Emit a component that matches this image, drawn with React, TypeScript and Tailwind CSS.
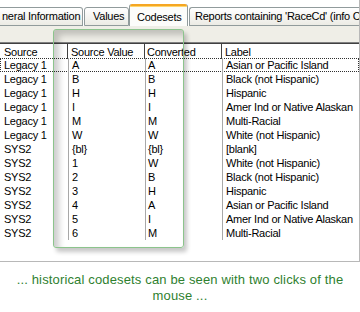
import React from "react";

const rows: [string, string, string, string][] = [
  ["Legacy 1", "A", "A", "Asian or Pacific Island"],
  ["Legacy 1", "B", "B", "Black (not Hispanic)"],
  ["Legacy 1", "H", "H", "Hispanic"],
  ["Legacy 1", "I", "I", "Amer Ind or Native Alaskan"],
  ["Legacy 1", "M", "M", "Multi-Racial"],
  ["Legacy 1", "W", "W", "White (not Hispanic)"],
  ["SYS2", "{bl}", "{bl}", "[blank]"],
  ["SYS2", "1", "W", "White (not Hispanic)"],
  ["SYS2", "2", "B", "Black (not Hispanic)"],
  ["SYS2", "3", "H", "Hispanic"],
  ["SYS2", "4", "A", "Asian or Pacific Island"],
  ["SYS2", "5", "I", "Amer Ind or Native Alaskan"],
  ["SYS2", "6", "M", "Multi-Racial"],
];

export default function App() {
  return (
    <div className="relative w-[360px] h-[312px] overflow-hidden bg-white font-['Liberation_Sans',Arial,sans-serif] text-[11px] tracking-[-0.25px] text-black">
      <div className="h-[262px] flex flex-col border-b border-r border-[#b8b8b8]">
        {/* Tabs */}
        <div className="h-[26px] flex items-end">
          <div className="w-[83px] h-[19px] flex items-center pl-[2px] border-t border-r border-b border-[#919b9c] rounded-tr-[3px] bg-gradient-to-b from-white to-[#ecebe5] whitespace-nowrap overflow-hidden">
            neral Information
          </div>
          <div className="ml-[1px] w-[45px] h-[19px] flex items-center pl-[8px] border border-[#919b9c] rounded-t-[3px] bg-gradient-to-b from-white to-[#ecebe5]">
            Values
          </div>
          <div className="w-[59px] h-[22px] flex flex-col border-x border-[#919b9c] rounded-t-[3px] bg-[#fcfcfa] overflow-hidden">
            <div className="h-[2px] bg-[#f5a623] shrink-0" />
            <div className="h-[1px] bg-[#ffd76e] shrink-0" />
            <div className="flex-1 flex items-start pt-[2px] pl-[7px]">Codesets</div>
          </div>
          <div className="ml-[1px] flex-1 h-[19px] flex items-center pl-[5px] border-t border-l border-b border-[#919b9c] rounded-tl-[3px] bg-gradient-to-b from-white to-[#ecebe5] whitespace-nowrap overflow-hidden">
            Reports containing 'RaceCd' (info C
          </div>
        </div>
        {/* Panel strip */}
        <div className="h-[16px] bg-[#efeee7]" />
        {/* List view */}
        <div className="flex-1 flex flex-col border-t border-[#808080]">
          <div className="h-[1px] bg-[#404040]" />
          <div className="h-[14px] grid grid-cols-[67px_77px_77px_1fr] items-center leading-[14px]">
            <div className="pl-[4px] pt-[1px]">Source</div>
            <div className="pl-[3px] pt-[1px] border-l border-[#404040] h-full">Source Value</div>
            <div className="pl-[2px] pt-[1px] border-l border-[#404040] h-full">Converted</div>
            <div className="pl-[3px] pt-[1px] border-l border-[#404040] h-full">Label</div>
          </div>
          <div className="flex flex-col">
            {rows.map((r, i) => (
              <div
                key={i}
                className={
                  "h-[14px] grid grid-cols-[67px_77px_77px_1fr] leading-[13px] " +
                  (i === 0 ? "border border-dotted border-[#303030]" : "border border-transparent")
                }
              >
                <div className="pl-[3px] whitespace-nowrap">{r[0]}</div>
                <div className="pl-[3px] border-l border-[#a8a8a8] -mt-[1px] pt-[1px] whitespace-nowrap">{r[1]}</div>
                <div className="pl-[2px] border-l border-[#a8a8a8] -mt-[1px] pt-[1px] whitespace-nowrap">{r[2]}</div>
                <div className="pl-[3px] border-l border-[#a8a8a8] -mt-[1px] pt-[1px] whitespace-nowrap">{r[3]}</div>
              </div>
            ))}
          </div>
        </div>
      </div>

      {/* Caption */}
      <div className="mt-[10px] px-[6px] text-center text-[13px] tracking-[0.15px] leading-[16px] text-[#2f7f2f]">
        ... historical codesets can be seen with two clicks of the
        <br />
        mouse ...
      </div>

      {/* Green highlight overlay */}
      <div className="absolute left-[53px] top-[29px] w-[131px] h-[219px] rounded-[3px] border border-[#8cc48c] shadow-[inset_5px_5px_6px_rgba(0,0,0,0.2),3px_4px_4px_rgba(0,0,0,0.22)] pointer-events-none" />
    </div>
  );
}
